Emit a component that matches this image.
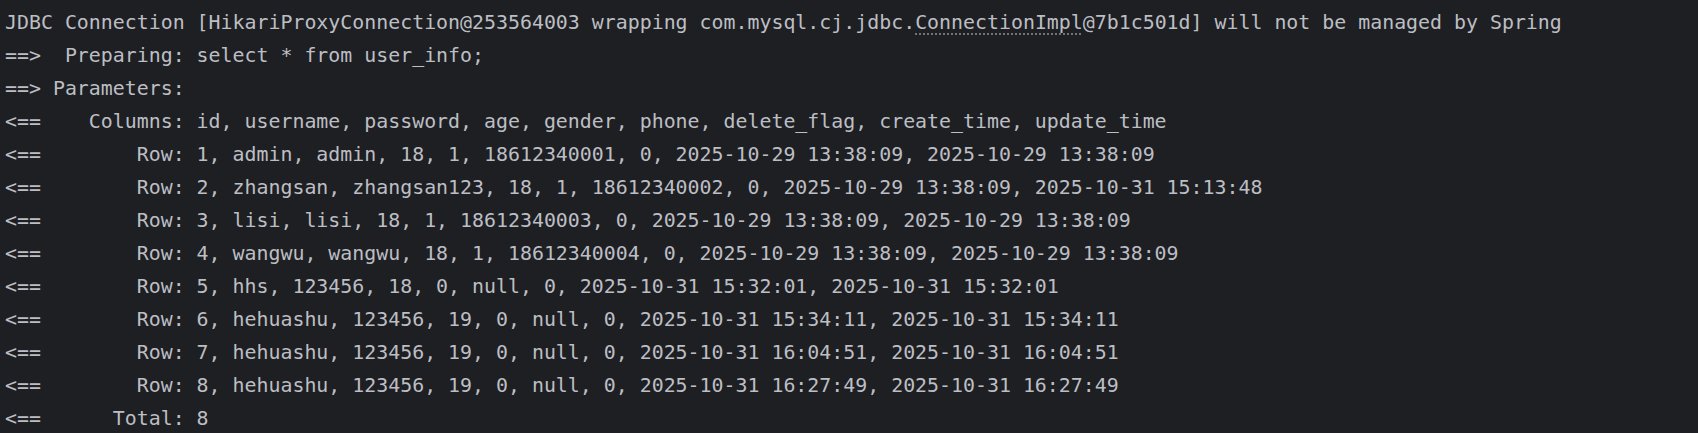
const rows = [
  "1, admin, admin, 18, 1, 18612340001, 0, 2025-10-29 13:38:09, 2025-10-29 13:38:09",
  "2, zhangsan, zhangsan123, 18, 1, 18612340002, 0, 2025-10-29 13:38:09, 2025-10-31 15:13:48",
  "3, lisi, lisi, 18, 1, 18612340003, 0, 2025-10-29 13:38:09, 2025-10-29 13:38:09",
  "4, wangwu, wangwu, 18, 1, 18612340004, 0, 2025-10-29 13:38:09, 2025-10-29 13:38:09",
  "5, hhs, 123456, 18, 0, null, 0, 2025-10-31 15:32:01, 2025-10-31 15:32:01",
  "6, hehuashu, 123456, 19, 0, null, 0, 2025-10-31 15:34:11, 2025-10-31 15:34:11",
  "7, hehuashu, 123456, 19, 0, null, 0, 2025-10-31 16:04:51, 2025-10-31 16:04:51",
  "8, hehuashu, 123456, 19, 0, null, 0, 2025-10-31 16:27:49, 2025-10-31 16:27:49",
];

export default function App() {
  return (
    <div className="h-[433px] w-full overflow-hidden bg-[#1e1f22] pl-[5px] pt-[6px] text-[#bcbec4] text-[19.9px] leading-[33px] whitespace-pre font-['DejaVu_Sans_Mono','Liberation_Mono',monospace]">
      <div>
        {"JDBC Connection [HikariProxyConnection@253564003 wrapping com.mysql.cj.jdbc."}
        <span className="underline decoration-dotted decoration-[#6f737a] underline-offset-[5px]">ConnectionImpl</span>
        {"@7b1c501d] will not be managed by Spring"}
      </div>
      <div>{"==>  Preparing: select * from user_info;"}</div>
      <div>{"==> Parameters: "}</div>
      <div>{"<==    Columns: id, username, password, age, gender, phone, delete_flag, create_time, update_time"}</div>
      {rows.map((r) => (
        <div key={r}>{"<==        Row: " + r}</div>
      ))}
      <div>{"<==      Total: 8"}</div>
    </div>
  );
}
